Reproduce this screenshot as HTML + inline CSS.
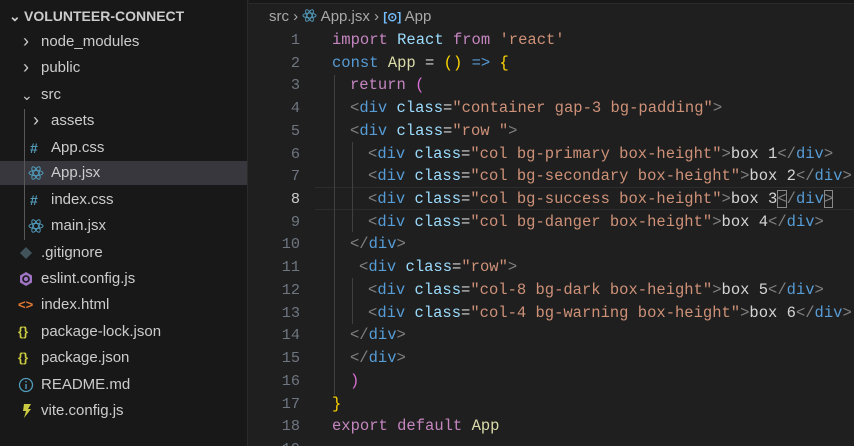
<!DOCTYPE html>
<html><head><meta charset="utf-8">
<style>
*{margin:0;padding:0;box-sizing:border-box}
html,body{width:854px;height:446px;overflow:hidden;background:#1f1f1f}
body{position:relative;font-family:"Liberation Sans",sans-serif}
#side{position:absolute;left:0;top:0;width:248px;height:446px;background:#181818;border-right:1px solid #2b2b2b}
.r{position:absolute;left:0;width:247px;height:24px;line-height:24px;font-size:15px;color:#cccccc;white-space:nowrap}
.r span.i{position:absolute;top:0;font-size:14px}
.r span.t{position:absolute;top:0}
.chev{font-size:18px !important;top:-1px !important}
#ed{position:absolute;left:249px;top:0;right:0;height:446px;background:#1f1f1f}
.l{position:absolute;left:0;right:0;height:22px;line-height:22px;font-family:"Liberation Mono",monospace;font-size:15.5px;white-space:pre;color:#d4d4d4}
.n{position:absolute;width:51px;text-align:right;left:0;color:#6e7681;font-size:15.2px}
.c{position:absolute;}
.k{color:#c586c0}.b{color:#569cd6}.v{color:#9cdcfe}.f{color:#dcdcaa}.s{color:#ce9178}.g{color:#808080}.y{color:#ffd700}.p{color:#da70d6}
.guide{position:absolute;width:1px;background:#404040}
</style></head><body>
<div id="side">
  <div class="r" style="top:4px;font-weight:bold;font-size:14px;color:#ccc"><span class="i" style="left:9px;color:#ccc">&#8964;</span><span class="t" style="left:24px">VOLUNTEER-CONNECT</span></div>
  <div class="r" style="top:30px"><span class="i chev" style="left:23px;color:#ccc">&#8250;</span><span class="t" style="left:41px">node_modules</span></div>
  <div class="r" style="top:56px"><span class="i chev" style="left:23px;color:#ccc">&#8250;</span><span class="t" style="left:41px">public</span></div>
  <div class="r" style="top:83px"><span class="i" style="left:21px;color:#ccc">&#8964;</span><span class="t" style="left:41px">src</span></div>
  <div class="r" style="top:109px"><span class="i chev" style="left:33px;color:#ccc">&#8250;</span><span class="t" style="left:51px">assets</span></div>
  <div class="r" style="top:136px"><span class="i" style="left:30px;color:#519aba;font-weight:bold">#</span><span class="t" style="left:51px">App.css</span></div>
  <div class="r" style="top:161px;background:#37373d"><span class="i" style="left:28px;color:#519aba"><svg width="16" height="16" viewBox="0 0 16 16" style="margin-top:4px"><g fill="none" stroke="#519aba" stroke-width="1"><ellipse cx="8" cy="8" rx="7" ry="2.6"/><ellipse cx="8" cy="8" rx="7" ry="2.6" transform="rotate(60 8 8)"/><ellipse cx="8" cy="8" rx="7" ry="2.6" transform="rotate(120 8 8)"/></g></svg></span><span class="t" style="left:51px">App.jsx</span></div>
  <div class="r" style="top:188px"><span class="i" style="left:30px;color:#519aba;font-weight:bold">#</span><span class="t" style="left:51px">index.css</span></div>
  <div class="r" style="top:214px"><span class="i" style="left:28px"><svg width="16" height="16" viewBox="0 0 16 16" style="margin-top:4px"><g fill="none" stroke="#519aba" stroke-width="1"><ellipse cx="8" cy="8" rx="7" ry="2.6"/><ellipse cx="8" cy="8" rx="7" ry="2.6" transform="rotate(60 8 8)"/><ellipse cx="8" cy="8" rx="7" ry="2.6" transform="rotate(120 8 8)"/></g></svg></span><span class="t" style="left:51px">main.jsx</span></div>
  <div class="r" style="top:241px"><span class="i" style="left:19px"><svg width="14" height="14" viewBox="0 0 14 14" style="margin-top:5px"><path d="M7 1L13 7 7 13 1 7Z" fill="#41535b"/></svg></span><span class="t" style="left:41px">.gitignore</span></div>
  <div class="r" style="top:267px"><span class="i" style="left:18px"><svg width="16" height="16" viewBox="0 0 16 16" style="margin-top:4px"><path d="M8 1L14 4.5V11.5L8 15 2 11.5V4.5Z" fill="#a074c4"/><circle cx="8" cy="8" r="3" fill="none" stroke="#181818" stroke-width="1.6"/></svg></span><span class="t" style="left:41px">eslint.config.js</span></div>
  <div class="r" style="top:293px"><span class="i" style="left:18px;color:#e37933;font-weight:bold;font-size:13px">&lt;&gt;</span><span class="t" style="left:41px">index.html</span></div>
  <div class="r" style="top:320px"><span class="i" style="left:18px;color:#cbcb41;font-weight:bold;font-size:13px">{}</span><span class="t" style="left:41px">package-lock.json</span></div>
  <div class="r" style="top:346px"><span class="i" style="left:18px;color:#cbcb41;font-weight:bold;font-size:13px">{}</span><span class="t" style="left:41px">package.json</span></div>
  <div class="r" style="top:373px"><span class="i" style="left:18px"><svg width="16" height="16" viewBox="0 0 16 16" style="margin-top:4px"><circle cx="8" cy="8" r="6.5" fill="none" stroke="#519aba" stroke-width="1.3"/><rect x="7.3" y="7" width="1.4" height="5" fill="#519aba"/><rect x="7.3" y="4" width="1.4" height="1.5" fill="#519aba"/></svg></span><span class="t" style="left:41px">README.md</span></div>
  <div class="r" style="top:399px"><span class="i" style="left:21px"><svg width="12" height="16" viewBox="0 0 12 16" style="margin-top:4px"><path d="M3 1H10L7 6H10L3 15 5 8H2Z" fill="#cbcb41"/></svg></span><span class="t" style="left:41px">vite.config.js</span></div>
  <div class="guide" style="left:24px;top:109px;height:131px;background:#585858"></div>
</div>
<div id="ed">
  <div style="position:absolute;left:0;right:0;top:0;height:4px;background:#181818;border-bottom:1px solid #2b2b2b"></div>
  <div style="position:absolute;left:20px;top:6px;height:22px;line-height:22px;font-size:15px;color:#a9a9a9;white-space:nowrap">src <span>&#8250;</span> <svg width="15" height="15" viewBox="0 0 16 16" style="vertical-align:-2px"><g fill="none" stroke="#519aba" stroke-width="1"><ellipse cx="8" cy="8" rx="7" ry="2.6"/><ellipse cx="8" cy="8" rx="7" ry="2.6" transform="rotate(60 8 8)"/><ellipse cx="8" cy="8" rx="7" ry="2.6" transform="rotate(120 8 8)"/></g></svg> App.jsx <span>&#8250;</span> <span style="color:#75beff;font-size:12px;font-weight:bold">[&#8857;]</span> App</div>
  <div style="position:absolute;left:66px;right:0;top:187px;height:23px;border-top:1px solid #2c2c2c;border-bottom:1px solid #2c2c2c"></div>
  <div class="guide" style="left:85px;top:75px;height:320px"></div>
  <div class="guide" style="left:103px;top:142px;height:90px"></div>
  <div class="guide" style="left:103px;top:278px;height:46px"></div>

  <div class="l" style="top:29px"><span class="n">1</span><span class="c" style="left:83px"><span class="k">import</span> <span class="v">React</span> <span class="k">from</span> <span class="s">'react'</span></span></div>
  <div class="l" style="top:52px"><span class="n">2</span><span class="c" style="left:83px"><span class="b">const</span> <span class="f">App</span> = <span class="y">()</span> <span class="b">=&gt;</span> <span class="y">{</span></span></div>
  <div class="l" style="top:74px"><span class="n">3</span><span class="c" style="left:101px"><span class="k">return</span> <span class="p">(</span></span></div>
  <div class="l" style="top:97px"><span class="n">4</span><span class="c" style="left:101px"><span class="g">&lt;</span><span class="b">div</span> <span class="v">class</span>=<span class="s">"container gap-3 bg-padding"</span><span class="g">&gt;</span></span></div>
  <div class="l" style="top:120px"><span class="n">5</span><span class="c" style="left:101px"><span class="g">&lt;</span><span class="b">div</span> <span class="v">class</span>=<span class="s">"row "</span><span class="g">&gt;</span></span></div>
  <div class="l" style="top:143px"><span class="n">6</span><span class="c" style="left:119px"><span class="g">&lt;</span><span class="b">div</span> <span class="v">class</span>=<span class="s">"col bg-primary box-height"</span><span class="g">&gt;</span>box 1<span class="g">&lt;/</span><span class="b">div</span><span class="g">&gt;</span></span></div>
  <div class="l" style="top:165px"><span class="n">7</span><span class="c" style="left:119px"><span class="g">&lt;</span><span class="b">div</span> <span class="v">class</span>=<span class="s">"col bg-secondary box-height"</span><span class="g">&gt;</span>box 2<span class="g">&lt;/</span><span class="b">div</span><span class="g">&gt;</span></span></div>
  <div class="l" style="top:188px"><span class="n" style="color:#cccccc">8</span><span class="c" style="left:119px"><span class="g">&lt;</span><span class="b">div</span> <span class="v">class</span>=<span class="s">"col bg-success box-height"</span><span class="g">&gt;</span>box 3<span class="g" style="outline:1px solid #888;outline-offset:-1px">&lt;</span><span class="g">/</span><span class="b">div</span><span class="g" style="outline:1px solid #888;outline-offset:-1px">&gt;</span></span></div>
  <div class="l" style="top:211px"><span class="n">9</span><span class="c" style="left:119px"><span class="g">&lt;</span><span class="b">div</span> <span class="v">class</span>=<span class="s">"col bg-danger box-height"</span><span class="g">&gt;</span>box 4<span class="g">&lt;/</span><span class="b">div</span><span class="g">&gt;</span></span></div>
  <div class="l" style="top:233px"><span class="n">10</span><span class="c" style="left:101px"><span class="g">&lt;/</span><span class="b">div</span><span class="g">&gt;</span></span></div>
  <div class="l" style="top:256px"><span class="n">11</span><span class="c" style="left:110px"><span class="g">&lt;</span><span class="b">div</span> <span class="v">class</span>=<span class="s">"row"</span><span class="g">&gt;</span></span></div>
  <div class="l" style="top:279px"><span class="n">12</span><span class="c" style="left:119px"><span class="g">&lt;</span><span class="b">div</span> <span class="v">class</span>=<span class="s">"col-8 bg-dark box-height"</span><span class="g">&gt;</span>box 5<span class="g">&lt;/</span><span class="b">div</span><span class="g">&gt;</span></span></div>
  <div class="l" style="top:302px"><span class="n">13</span><span class="c" style="left:119px"><span class="g">&lt;</span><span class="b">div</span> <span class="v">class</span>=<span class="s">"col-4 bg-warning box-height"</span><span class="g">&gt;</span>box 6<span class="g">&lt;/</span><span class="b">div</span><span class="g">&gt;</span></span></div>
  <div class="l" style="top:324px"><span class="n">14</span><span class="c" style="left:101px"><span class="g">&lt;/</span><span class="b">div</span><span class="g">&gt;</span></span></div>
  <div class="l" style="top:347px"><span class="n">15</span><span class="c" style="left:101px"><span class="g">&lt;/</span><span class="b">div</span><span class="g">&gt;</span></span></div>
  <div class="l" style="top:370px"><span class="n">16</span><span class="c" style="left:101px"><span class="p">)</span></span></div>
  <div class="l" style="top:393px"><span class="n">17</span><span class="c" style="left:83px"><span class="y">}</span></span></div>
  <div class="l" style="top:415px"><span class="n">18</span><span class="c" style="left:83px"><span class="k">export</span> <span class="k">default</span> <span class="f">App</span></span></div>
  <div class="l" style="top:438px"><span class="n">19</span></div>
</div>
</body></html>
